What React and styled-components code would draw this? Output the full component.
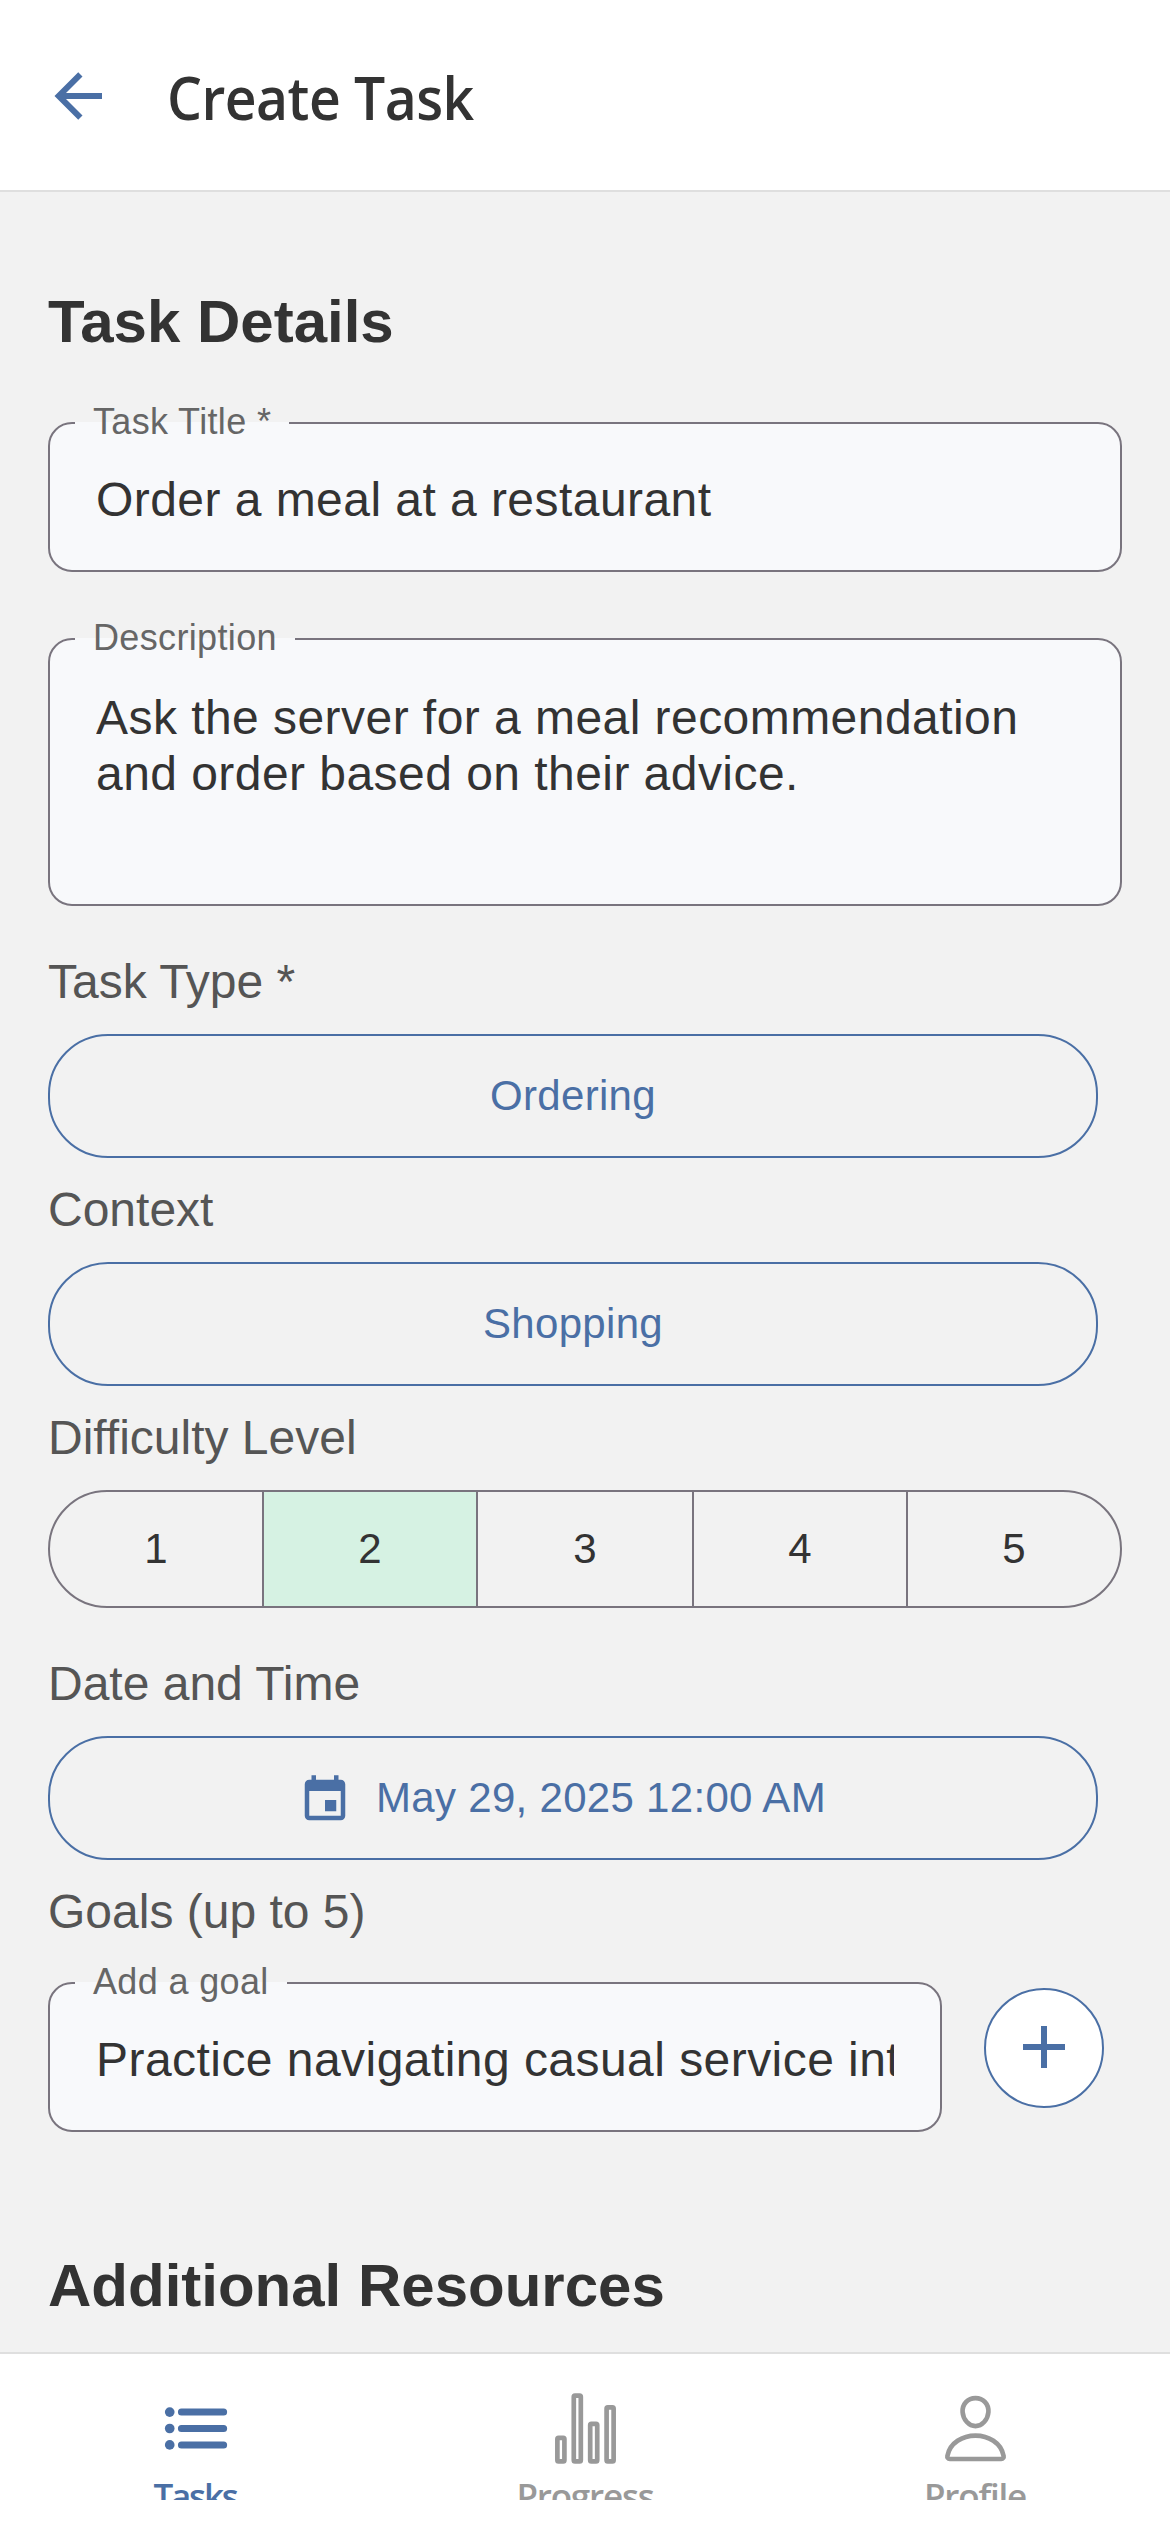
import React from "react";
import styled, { createGlobalStyle } from "styled-components";

const blue = "#4a6fa5";
const outline = "#79747e";
const surface = "#f8f9fb";

const GlobalStyle = createGlobalStyle`
  *, *::before, *::after { box-sizing: border-box; }
  html, body { margin: 0; padding: 0; background: #fff; }
  body { font-family: "Liberation Sans", Arial, sans-serif; color: #333; }
`;

const Screen = styled.div`
  display: flex;
  flex-direction: column;
  width: 1170px;
  height: 2532px;
  overflow: hidden;
  background: #fff;
`;

const Header = styled.header`
  display: flex;
  align-items: center;
  flex: none;
  height: 192px;
  padding-left: 42px;
  border-bottom: 2px solid #dfdfdf;
`;

const BackButton = styled.button`
  display: flex;
  margin: 2px 53px 0 0;
  padding: 0;
  border: 0;
  background: none;
  color: ${blue};
`;

const Title = styled.h1`
  margin: 4px 0 0;
  font: 600 59px/80px "Open Sans", "Noto Sans", sans-serif;
  letter-spacing: -0.6px;
  transform: scaleX(0.937);
  transform-origin: left center;
`;

const Main = styled.main`
  flex: 1;
  min-height: 0;
  overflow: hidden;
  padding: 93px 48px 0;
  background: #f2f2f2;
`;

const SectionTitle = styled.h2`
  margin: 0 0 64px;
  font-size: 60px;
  line-height: 73px;
  font-weight: 700;
`;

const Field = styled.div`
  position: relative;
  flex: none;
  width: ${(p) => p.$width || "100%"};
  height: ${(p) => p.$height || "150px"};
  margin-bottom: ${(p) => p.$gap || "0"};
  padding: ${(p) => (p.$multiline ? "50px" : "49px")} 46px 0;
  border: 2px solid ${outline};
  border-radius: 24px;
  background: ${surface};
`;

const FloatingLabel = styled.label`
  position: absolute;
  top: -23px;
  left: 25px;
  padding: 0 18px;
  font-size: 36px;
  line-height: 41px;
  letter-spacing: 0.35px;
  white-space: nowrap;
  color: #666;
  background: linear-gradient(transparent 21px, ${surface} 21px);
`;

const FieldValue = styled.div`
  overflow: hidden;
  font-size: 48px;
  line-height: ${(p) => (p.$multiline ? "56px" : "53px")};
  letter-spacing: 0.45px;
  white-space: ${(p) => (p.$multiline ? "pre-line" : "nowrap")};
`;

const Group = styled.section`
  margin-top: ${(p) => (p.$spaced ? "49px" : "25px")};
`;

const GroupLabel = styled.div`
  margin-bottom: ${(p) => p.$gap || "26px"};
  font-size: 48px;
  line-height: 53px;
  color: #555;
`;

const PillButton = styled.button`
  display: flex;
  align-items: center;
  justify-content: center;
  gap: 24px;
  width: 1050px;
  height: 124px;
  padding: 0 ${(p) => (p.$withIcon ? "22px" : "0")} 2px 0;
  border: 2px solid ${blue};
  border-radius: 60px;
  background: transparent;
  color: ${blue};
  font: 42px/47px "Liberation Sans", Arial, sans-serif;
  letter-spacing: 0.3px;

  svg { margin-top: 5px; }
`;

const Segments = styled.div`
  display: grid;
  grid-template-columns: 212px 214px 216px 214px 1fr;
  height: 118px;
  border: 2px solid ${outline};
  border-radius: 60px;
  overflow: hidden;
`;

const Segment = styled.button`
  padding: 0 0 1px;
  border: 0 solid ${outline};
  border-left-width: ${(p) => (p.$first ? "0" : "2px")};
  background: ${(p) => (p.$selected ? "#d6f2e3" : "transparent")};
  color: #333;
  font: 42px/47px "Liberation Sans", Arial, sans-serif;
`;

const GoalRow = styled.div`
  display: flex;
  align-items: flex-start;
  gap: 42px;
  margin-bottom: 117px;
`;

const AddButton = styled.button`
  display: flex;
  align-items: center;
  justify-content: center;
  width: 120px;
  height: 120px;
  margin-top: 6px;
  padding: 0 0 2px;
  border: 2px solid ${blue};
  border-radius: 50%;
  background: #fff;
  color: ${blue};
`;

const TabBar = styled.nav`
  display: grid;
  grid-template-columns: repeat(3, 1fr);
  flex: none;
  height: 148px;
  margin-bottom: 32px;
  padding-top: 37px;
  border-top: 2px solid #dfdfdf;
  overflow: hidden;
`;

const Tab = styled.a`
  display: flex;
  flex-direction: column;
  align-items: center;
  color: ${(p) => (p.$active ? blue : "#999")};
  font: 600 35px/49px "Open Sans", "Noto Sans", sans-serif;
  letter-spacing: ${(p) => p.$tracking || "-1.2px"};

  svg { flex: none; margin-bottom: 5px; }
`;

const Glyph = ({ size, d }) => (
  <svg width={size} height={size} viewBox="0 0 24 24" fill="currentColor">
    <path d={d} />
  </svg>
);

const TabGlyph = ({ children }) => (
  <svg width="75" height="75" viewBox="0 0 512 512" fill="none" stroke="currentColor" strokeWidth="32" strokeLinecap="round" strokeLinejoin="round">
    {children}
  </svg>
);

const arrowLeft = "M20,11V13H8L13.5,18.5L12.08,19.92L4.16,12L12.08,4.08L13.5,5.5L8,11H20Z";
const plus = "M19,13H13V19H11V13H5V11H11V5H13V11H19V13Z";
const calendar =
  "M19,19H5V8H19M16,1V3H8V1H6V3H5C3.89,3 3,3.89 3,5V19A2,2 0 0,0 5,21H19A2,2 0 0,0 21,19V5C21,3.89 20.1,3 19,3H18V1M17,12H12V17H17V12Z";

export default function App() {
  return (
    <Screen>
      <GlobalStyle />
      <Header>
        <BackButton aria-label="Back">
          <Glyph size={72} d={arrowLeft} />
        </BackButton>
        <Title>Create Task</Title>
      </Header>

      <Main>
        <SectionTitle>Task Details</SectionTitle>

        <Field $gap="66px">
          <FloatingLabel>Task Title *</FloatingLabel>
          <FieldValue>Order a meal at a restaurant</FieldValue>
        </Field>

        <Field $height="268px" $multiline>
          <FloatingLabel>Description</FloatingLabel>
          <FieldValue $multiline>
            {"Ask the server for a meal recommendation\nand order based on their advice."}
          </FieldValue>
        </Field>

        <Group $spaced>
          <GroupLabel>Task Type *</GroupLabel>
          <PillButton>Ordering</PillButton>
        </Group>

        <Group>
          <GroupLabel>Context</GroupLabel>
          <PillButton>Shopping</PillButton>
        </Group>

        <Group>
          <GroupLabel>Difficulty Level</GroupLabel>
          <Segments>
            {[1, 2, 3, 4, 5].map((n) => (
              <Segment key={n} $first={n === 1} $selected={n === 2}>
                {n}
              </Segment>
            ))}
          </Segments>
        </Group>

        <Group $spaced>
          <GroupLabel>Date and Time</GroupLabel>
          <PillButton $withIcon>
            <Glyph size={54} d={calendar} />
            <span>May 29, 2025 12:00 AM</span>
          </PillButton>
        </Group>

        <Group>
          <GroupLabel $gap="44px">Goals (up to 5)</GroupLabel>
          <GoalRow>
            <Field $width="894px">
              <FloatingLabel>Add a goal</FloatingLabel>
              <FieldValue>Practice navigating casual service int</FieldValue>
            </Field>
            <AddButton aria-label="Add goal">
              <Glyph size={72} d={plus} />
            </AddButton>
          </GoalRow>
        </Group>

        <SectionTitle>Additional Resources</SectionTitle>
      </Main>

      <TabBar>
        <Tab $active $tracking="-2.2px">
          <TabGlyph>
            <path strokeWidth="48" d="M160 144h288M160 256h288M160 368h288" />
            <g fill="currentColor" stroke="none">
              <circle cx="80" cy="144" r="33" />
              <circle cx="80" cy="256" r="33" />
              <circle cx="80" cy="368" r="33" />
            </g>
          </TabGlyph>
          Tasks
        </Tab>
        <Tab>
          <TabGlyph>
            <rect x="64" y="320" width="48" height="160" rx="8" />
            <rect x="288" y="224" width="48" height="256" rx="8" />
            <rect x="400" y="112" width="48" height="368" rx="8" />
            <rect x="176" y="32" width="48" height="448" rx="8" />
          </TabGlyph>
          Progress
        </Tab>
        <Tab>
          <TabGlyph>
            <path d="M344 144c-3.92 52.87-44 96-88 96s-84.15-43.12-88-96c-4-55 35-96 88-96s92 42 88 96z" />
            <path d="M256 304c-87 0-175.3 48-191.64 138.6C62.39 453.52 68.57 464 80 464h352c11.44 0 17.62-10.48 15.65-21.4C431.3 352 343 304 256 304z" />
          </TabGlyph>
          Profile
        </Tab>
      </TabBar>
    </Screen>
  );
}
